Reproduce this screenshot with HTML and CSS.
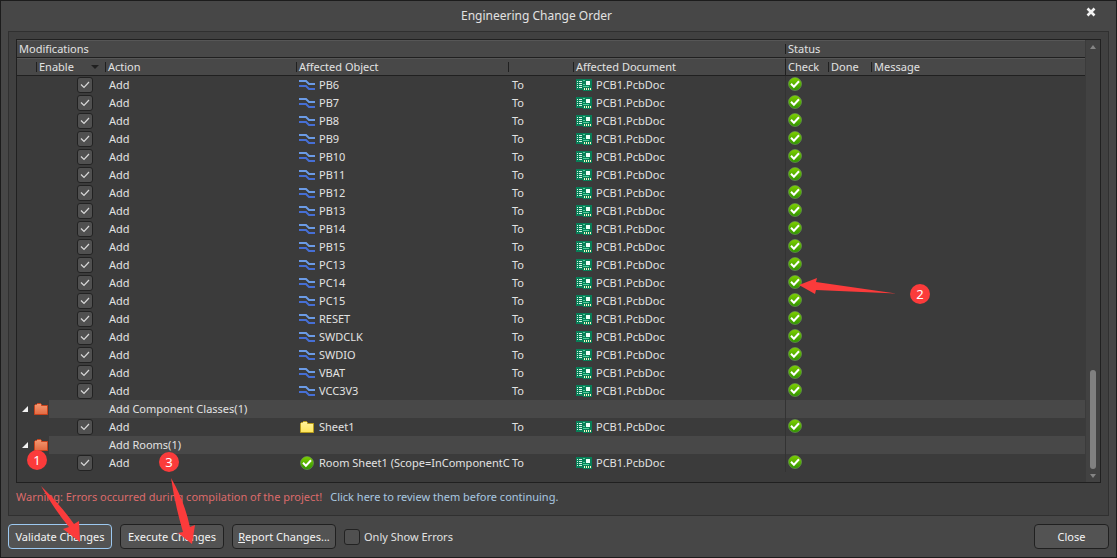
FILE: index.html
```html
<!DOCTYPE html>
<html lang="en">
<head>
<meta charset="utf-8">
<title>Engineering Change Order</title>
<link rel="stylesheet" href="styles.css">
</head>
<body>
<svg class="defs" aria-hidden="true">
  <defs>
    <linearGradient id="green" x1="0" y1="0" x2="0" y2="1"><stop offset="0" stop-color="#7fd000"/><stop offset="1" stop-color="#2f9300"/></linearGradient>
    <linearGradient id="orange" x1="0" y1="0" x2="0" y2="1"><stop offset="0" stop-color="#f59a72"/><stop offset="1" stop-color="#e26a42"/></linearGradient>
    <linearGradient id="yellow" x1="0" y1="0" x2="0" y2="1"><stop offset="0" stop-color="#fff3a0"/><stop offset="1" stop-color="#ffe65a"/></linearGradient>
    <symbol id="net" viewBox="0 0 16 12">
      <path fill="none" stroke="#6b9be6" stroke-width="2" d="M0 2h7l3 3h6"/>
      <path fill="none" stroke="#466fd6" stroke-width="2" d="M0 7h7l3 3h6"/>
    </symbol>
    <symbol id="pcb" viewBox="0 0 16 12">
      <path fill="#087f58" d="M0 0h16v12H7v-1H0z"/>
      <path stroke="#d8f3e6" d="M1 2.500h1M3 2.500h3M1 4.500h1M3 4.500h3M1 6.500h1M3 6.500h3M1 8.500h1M3 8.500h3"/>
      <path stroke="#4fd09a" d="M7 1.500h2M7 5.500h2M7 7.500h6"/>
      <path fill="#eafff5" d="M10 2h4v4h-4z"/>
      <path stroke="#fff3c4" stroke-width="2" stroke-dasharray="1 1" d="M8 10h7"/>
    </symbol>
    <symbol id="ok" viewBox="0 0 14 14">
      <circle cx="7" cy="7" r="6.500" fill="url(#green)" stroke="#6f9a5c" stroke-width=".6"/>
      <path fill="none" stroke="#fff" stroke-width="2" d="M3 6.800l2.900 2.900 5.100-5.400"/>
    </symbol>
    <symbol id="folder" viewBox="0 0 14 12">
      <path d="M.5 11.500v-9l1-1h1l1-1h3l1 1v1h6v9z" stroke-width="1"/>
    </symbol>
  </defs>
</svg>

<main class="dialog">
  <header class="titlebar">
    <h1 class="title">Engineering Change Order</h1>
    <button class="dismiss" type="button" aria-label="Close window">
      <svg width="10" height="10" viewBox="0 0 10 10"><path d="M1.500 1.500l7 7M8.500 1.500l-7 7" stroke="#f2f2f2" stroke-width="2.600"/></svg>
    </button>
  </header>

  <section class="panel">
    <div class="grid">
      <table class="changes">
        <colgroup><col class="c-tree"><col class="c-enable"><col class="c-action"><col class="c-object"><col class="c-to"><col class="c-object"><col class="c-flag"><col class="c-flag"><col></colgroup>
        <thead>
          <tr><th colspan="6">Modifications</th><th class="tick" colspan="3">Status</th></tr>
          <tr><th></th><th class="tick sorted">Enable</th><th class="tick">Action</th><th class="tick">Affected Object</th><th class="tick"></th><th class="tick">Affected Document</th><th class="full">Check</th><th class="tick">Done</th><th class="tick">Message</th></tr>
        </thead>
        <tbody>
          <tr><td></td><td class="enable"><input type="checkbox" class="box" aria-label="Enable PB6" checked></td><td>Add</td><td><span class="item"><svg class="net"><use href="#net"/></svg>PB6</span></td><td>To</td><td><span class="item"><svg class="net"><use href="#pcb"/></svg>PCB1.PcbDoc</span></td><td class="status"><svg class="ok"><use href="#ok"/></svg></td><td></td><td></td></tr>
          <tr><td></td><td class="enable"><input type="checkbox" class="box" aria-label="Enable PB7" checked></td><td>Add</td><td><span class="item"><svg class="net"><use href="#net"/></svg>PB7</span></td><td>To</td><td><span class="item"><svg class="net"><use href="#pcb"/></svg>PCB1.PcbDoc</span></td><td class="status"><svg class="ok"><use href="#ok"/></svg></td><td></td><td></td></tr>
          <tr><td></td><td class="enable"><input type="checkbox" class="box" aria-label="Enable PB8" checked></td><td>Add</td><td><span class="item"><svg class="net"><use href="#net"/></svg>PB8</span></td><td>To</td><td><span class="item"><svg class="net"><use href="#pcb"/></svg>PCB1.PcbDoc</span></td><td class="status"><svg class="ok"><use href="#ok"/></svg></td><td></td><td></td></tr>
          <tr><td></td><td class="enable"><input type="checkbox" class="box" aria-label="Enable PB9" checked></td><td>Add</td><td><span class="item"><svg class="net"><use href="#net"/></svg>PB9</span></td><td>To</td><td><span class="item"><svg class="net"><use href="#pcb"/></svg>PCB1.PcbDoc</span></td><td class="status"><svg class="ok"><use href="#ok"/></svg></td><td></td><td></td></tr>
          <tr><td></td><td class="enable"><input type="checkbox" class="box" aria-label="Enable PB10" checked></td><td>Add</td><td><span class="item"><svg class="net"><use href="#net"/></svg>PB10</span></td><td>To</td><td><span class="item"><svg class="net"><use href="#pcb"/></svg>PCB1.PcbDoc</span></td><td class="status"><svg class="ok"><use href="#ok"/></svg></td><td></td><td></td></tr>
          <tr><td></td><td class="enable"><input type="checkbox" class="box" aria-label="Enable PB11" checked></td><td>Add</td><td><span class="item"><svg class="net"><use href="#net"/></svg>PB11</span></td><td>To</td><td><span class="item"><svg class="net"><use href="#pcb"/></svg>PCB1.PcbDoc</span></td><td class="status"><svg class="ok"><use href="#ok"/></svg></td><td></td><td></td></tr>
          <tr><td></td><td class="enable"><input type="checkbox" class="box" aria-label="Enable PB12" checked></td><td>Add</td><td><span class="item"><svg class="net"><use href="#net"/></svg>PB12</span></td><td>To</td><td><span class="item"><svg class="net"><use href="#pcb"/></svg>PCB1.PcbDoc</span></td><td class="status"><svg class="ok"><use href="#ok"/></svg></td><td></td><td></td></tr>
          <tr><td></td><td class="enable"><input type="checkbox" class="box" aria-label="Enable PB13" checked></td><td>Add</td><td><span class="item"><svg class="net"><use href="#net"/></svg>PB13</span></td><td>To</td><td><span class="item"><svg class="net"><use href="#pcb"/></svg>PCB1.PcbDoc</span></td><td class="status"><svg class="ok"><use href="#ok"/></svg></td><td></td><td></td></tr>
          <tr><td></td><td class="enable"><input type="checkbox" class="box" aria-label="Enable PB14" checked></td><td>Add</td><td><span class="item"><svg class="net"><use href="#net"/></svg>PB14</span></td><td>To</td><td><span class="item"><svg class="net"><use href="#pcb"/></svg>PCB1.PcbDoc</span></td><td class="status"><svg class="ok"><use href="#ok"/></svg></td><td></td><td></td></tr>
          <tr><td></td><td class="enable"><input type="checkbox" class="box" aria-label="Enable PB15" checked></td><td>Add</td><td><span class="item"><svg class="net"><use href="#net"/></svg>PB15</span></td><td>To</td><td><span class="item"><svg class="net"><use href="#pcb"/></svg>PCB1.PcbDoc</span></td><td class="status"><svg class="ok"><use href="#ok"/></svg></td><td></td><td></td></tr>
          <tr><td></td><td class="enable"><input type="checkbox" class="box" aria-label="Enable PC13" checked></td><td>Add</td><td><span class="item"><svg class="net"><use href="#net"/></svg>PC13</span></td><td>To</td><td><span class="item"><svg class="net"><use href="#pcb"/></svg>PCB1.PcbDoc</span></td><td class="status"><svg class="ok"><use href="#ok"/></svg></td><td></td><td></td></tr>
          <tr><td></td><td class="enable"><input type="checkbox" class="box" aria-label="Enable PC14" checked></td><td>Add</td><td><span class="item"><svg class="net"><use href="#net"/></svg>PC14</span></td><td>To</td><td><span class="item"><svg class="net"><use href="#pcb"/></svg>PCB1.PcbDoc</span></td><td class="status"><svg class="ok"><use href="#ok"/></svg></td><td></td><td></td></tr>
          <tr><td></td><td class="enable"><input type="checkbox" class="box" aria-label="Enable PC15" checked></td><td>Add</td><td><span class="item"><svg class="net"><use href="#net"/></svg>PC15</span></td><td>To</td><td><span class="item"><svg class="net"><use href="#pcb"/></svg>PCB1.PcbDoc</span></td><td class="status"><svg class="ok"><use href="#ok"/></svg></td><td></td><td></td></tr>
          <tr><td></td><td class="enable"><input type="checkbox" class="box" aria-label="Enable RESET" checked></td><td>Add</td><td><span class="item"><svg class="net"><use href="#net"/></svg>RESET</span></td><td>To</td><td><span class="item"><svg class="net"><use href="#pcb"/></svg>PCB1.PcbDoc</span></td><td class="status"><svg class="ok"><use href="#ok"/></svg></td><td></td><td></td></tr>
          <tr><td></td><td class="enable"><input type="checkbox" class="box" aria-label="Enable SWDCLK" checked></td><td>Add</td><td><span class="item"><svg class="net"><use href="#net"/></svg>SWDCLK</span></td><td>To</td><td><span class="item"><svg class="net"><use href="#pcb"/></svg>PCB1.PcbDoc</span></td><td class="status"><svg class="ok"><use href="#ok"/></svg></td><td></td><td></td></tr>
          <tr><td></td><td class="enable"><input type="checkbox" class="box" aria-label="Enable SWDIO" checked></td><td>Add</td><td><span class="item"><svg class="net"><use href="#net"/></svg>SWDIO</span></td><td>To</td><td><span class="item"><svg class="net"><use href="#pcb"/></svg>PCB1.PcbDoc</span></td><td class="status"><svg class="ok"><use href="#ok"/></svg></td><td></td><td></td></tr>
          <tr><td></td><td class="enable"><input type="checkbox" class="box" aria-label="Enable VBAT" checked></td><td>Add</td><td><span class="item"><svg class="net"><use href="#net"/></svg>VBAT</span></td><td>To</td><td><span class="item"><svg class="net"><use href="#pcb"/></svg>PCB1.PcbDoc</span></td><td class="status"><svg class="ok"><use href="#ok"/></svg></td><td></td><td></td></tr>
          <tr><td></td><td class="enable"><input type="checkbox" class="box" aria-label="Enable VCC3V3" checked></td><td>Add</td><td><span class="item"><svg class="net"><use href="#net"/></svg>VCC3V3</span></td><td>To</td><td><span class="item"><svg class="net"><use href="#pcb"/></svg>PCB1.PcbDoc</span></td><td class="status"><svg class="ok"><use href="#ok"/></svg></td><td></td><td></td></tr>
          <tr class="group"><td colspan="2" class="node"><span class="item"><svg class="caret" viewBox="0 0 6 6"><path d="M6 0v6H0z" fill="#f2f2f2"/></svg><svg class="folder red"><use href="#folder"/></svg></span></td><td colspan="4">Add Component Classes(1)</td><td class="status"></td><td></td><td></td></tr>
          <tr><td></td><td class="enable"><input type="checkbox" class="box" aria-label="Enable Sheet1" checked></td><td>Add</td><td><span class="item"><svg class="folder gold"><use href="#folder"/></svg>Sheet1</span></td><td>To</td><td><span class="item"><svg class="net"><use href="#pcb"/></svg>PCB1.PcbDoc</span></td><td class="status"><svg class="ok"><use href="#ok"/></svg></td><td></td><td></td></tr>
          <tr class="group"><td colspan="2" class="node"><span class="item"><svg class="caret" viewBox="0 0 6 6"><path d="M6 0v6H0z" fill="#f2f2f2"/></svg><svg class="folder red"><use href="#folder"/></svg></span></td><td colspan="4">Add Rooms(1)</td><td class="status"></td><td></td><td></td></tr>
          <tr><td></td><td class="enable"><input type="checkbox" class="box" aria-label="Enable Room Sheet1" checked></td><td>Add</td><td class="wide"><span class="item"><svg class="ok room"><use href="#ok"/></svg>Room Sheet1 (Scope=InComponentC</span></td><td>To</td><td><span class="item"><svg class="net"><use href="#pcb"/></svg>PCB1.PcbDoc</span></td><td class="status"><svg class="ok"><use href="#ok"/></svg></td><td></td><td></td></tr>
        </tbody>
      </table>
      <div class="scrollbar" aria-hidden="true">
        <svg class="arrow" viewBox="0 0 6 4"><path d="M0 4l3-4 3 4z"/></svg>
        <div class="thumb"></div>
        <svg class="arrow" viewBox="0 0 6 4"><path d="M0 0l3 4 3-4z"/></svg>
      </div>
    </div>
    <p class="notice"><span class="warning">Warning: Errors occurred during compilation of the project!</span><a class="review" href="#">Click here to review them before continuing.</a></p>
  </section>

  <footer class="actions">
    <button type="button" class="btn focused">Validate Changes</button>
    <button type="button" class="btn">Execute Changes</button>
    <button type="button" class="btn"><u>R</u>eport Changes...</button>
    <label class="only"><input type="checkbox" class="box">Only Show Errors</label>
    <button type="button" class="btn close">Close</button>
  </footer>

  <svg class="note note-1" width="60" height="100" viewBox="0 0 60 100">
    <circle cx="12" cy="12" r="10"/><text x="12" y="17">1</text>
    <path d="M16 38Q34 55 49 76l5-3 1 21-17-13 6-2Q29 61 16 38z"/>
  </svg>
  <svg class="note note-2" width="140" height="30" viewBox="0 0 140 30">
    <circle cx="125" cy="17" r="10"/><text x="125" y="22">2</text>
    <path d="M4 8l18-7-1 4 80 11.500L21 13l-1 4z"/>
  </svg>
  <svg class="note note-3" width="50" height="100" viewBox="0 0 50 100">
    <circle cx="14" cy="12" r="10"/><text x="14" y="17">3</text>
    <path d="M16 28Q29 50 35 77l5-2-3 19-14-11 5-1Q20 55 16 28z"/>
  </svg>
</main>
</body>
</html>
```

FILE: styles.css
```css
* { box-sizing: border-box; }

body {
  margin: 0;
  background: #474747;
  color: #e2e2e2;
  font: 11px/16px "Noto Sans", "Open Sans", sans-serif;
}

.defs { position: absolute; width: 0; height: 0; }

.dialog {
  position: relative;
  display: flex;
  flex-direction: column;
  min-height: 100vh;
  padding: 0 7px;
  border: 1px solid #1c1c1c;
}

.titlebar {
  display: grid;
  grid-template-columns: 1fr 44px;
  align-items: center;
  height: 30px;
}

.title {
  margin: 0;
  font-size: 12px;
  font-weight: 400;
  text-align: center;
}

.dismiss {
  display: grid;
  place-items: center;
  height: 16px;
  margin-bottom: 8px;
  padding: 0 0 0 8px;
  border: 0;
  background: none;
}

.panel {
  flex: 1;
  padding: 7px 7px 0;
  border: 1px solid #303030;
  background: #404040;
}

.grid {
  display: flex;
  border: 1px solid #202020;
  background: #3b3b3b;
}

.changes {
  flex: 1;
  width: 100%;
  margin-bottom: 10px;
  table-layout: fixed;
  border-collapse: separate;
  border-spacing: 0;
}

.c-tree { width: 19px; }
.c-enable { width: 69px; }
.c-action { width: 191px; }
.c-object { width: 212px; }
.c-to { width: 65px; }
.c-flag { width: 43px; }

th, td {
  height: 18px;
  padding: 0 0 0 4px;
  overflow: hidden;
  line-height: 16px;
  font-weight: 400;
  text-align: left;
  vertical-align: middle;
  white-space: nowrap;
}

th {
  padding-left: 3px;
  border-top: 1px solid #565656;
  border-bottom: 1px solid #202020;
  background: #484848;
}

th:first-child { padding-left: 2px; }

td.wide { overflow: visible; }

.tick {
  background: linear-gradient(#202020, #202020) 0 3px / 1px 10px no-repeat #484848;
}

.full { border-left: 1px solid #202020; padding-left: 2px; }

.sorted::after {
  content: "";
  float: right;
  margin: 6px 6px 0 0;
  border: 4px solid transparent;
  border-top-color: #202020;
  border-bottom: 0;
}

.enable { padding-left: 41px; }

.box {
  display: block;
  flex: none;
  width: 16px;
  height: 16px;
  margin: 0;
  appearance: none;
  border: 1px solid #222;
  border-radius: 3px;
  background: #505050;
}

.box:checked {
  background: url("data:image/svg+xml,%3Csvg xmlns='http://www.w3.org/2000/svg' viewBox='0 0 14 14'%3E%3Cpath d='M3 6.500l3 3 5-5.500' fill='none' stroke='%23d8d8d8' stroke-width='1.200'/%3E%3C/svg%3E") center / 14px 14px #505050;
}

.item {
  display: flex;
  align-items: center;
  height: 18px;
  margin-left: -1px;
  gap: 4px;
}

.net { flex: none; width: 16px; height: 12px; }

.ok { display: block; flex: none; width: 14px; height: 14px; }

.room { margin: 0 1px; }

.status { padding: 0 0 2px 2px; border-left: 1px solid #333; }

.folder { flex: none; width: 14px; height: 12px; margin: 0 1px; }
.red { fill: url(#orange); stroke: #c8421c; }
.gold { fill: url(#yellow); stroke: #b89c1c; }

.group td { background: #484848; }

.group .node {
  background: linear-gradient(to right, #3b3b3b 32px, #484848 32px);
}

.node .item { margin-left: 1px; gap: 5px; }

.caret { width: 6px; height: 6px; }

.scrollbar {
  display: flex;
  flex-direction: column;
  align-items: center;
  width: 15px;
  padding: 5px 0 4px;
  border-left: 1px solid #3b3b3b;
  background: #424242;
}

.arrow { width: 6px; height: 4px; fill: #858585; }

.thumb {
  width: 6px;
  height: 99px;
  margin: auto 0 5px;
  border-radius: 3px;
  background: #808080;
}

.notice {
  display: flex;
  gap: 8px;
  margin: 0;
  padding: 6px 0 10px;
}

.warning { color: #dc6b6b; }

.review { color: #a9c8e0; text-decoration: none; }

.actions {
  display: flex;
  align-items: center;
  gap: 8px;
  padding: 8px 0;
}

.btn {
  min-width: 104px;
  height: 25px;
  padding: 0 4px;
  border: 1px solid #202020;
  border-radius: 4px;
  background: #535353;
  color: #f4f4f4;
  font: inherit;
  white-space: nowrap;
}

.focused { border-color: #9cc8f0; }

.close { min-width: 75px; margin-left: auto; }

.only { display: flex; align-items: center; gap: 4px; }

/* Numbered callouts laid over the dialog */
.note {
  position: absolute;
  fill: #fb3b3b;
  pointer-events: none;
}

.note text {
  fill: #fff;
  font-size: 13px;
  text-anchor: middle;
}

.note-1 { left: 24px; top: 447px; }
.note-2 { left: 794px; top: 276px; }
.note-3 { left: 154px; top: 449px; }
```
